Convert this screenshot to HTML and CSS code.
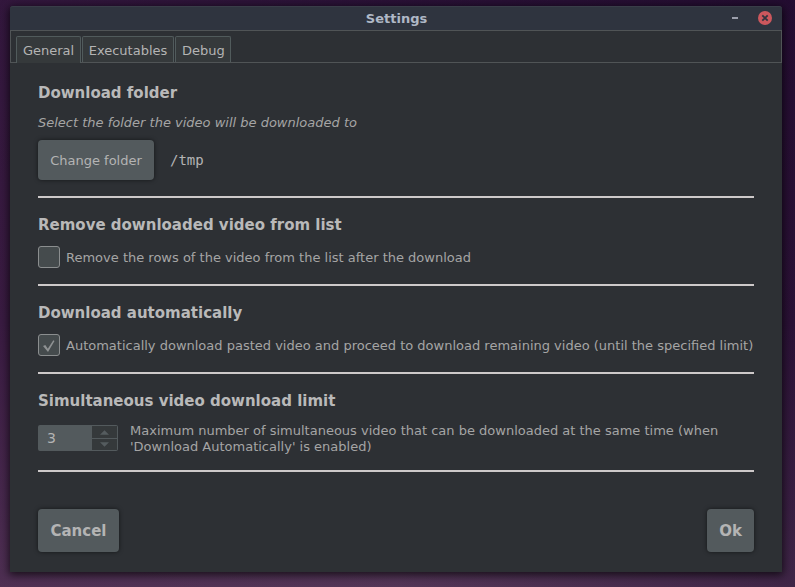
FILE: index.html
```
<!DOCTYPE html>
<html lang="en">
<head>
<meta charset="utf-8">
<title>Settings</title>
<link rel="stylesheet" href="styles.css">
</head>
<body>
<main class="window">
  <header class="titlebar">
    <span class="title">Settings</span>
    <svg class="controls" width="42" height="16" viewBox="0 0 42 16">
      <rect x="0" y="7" width="6" height="2" fill="#9c9fac"/>
      <circle cx="33" cy="8" r="7" fill="#cc575d"/>
      <path d="M30.3 5.3l5.4 5.4m0-5.4l-5.4 5.4" stroke="#2f343f" stroke-width="1.8"/>
    </svg>
  </header>
  <nav class="tabs">
    <span class="tab tab-general active">General</span>
    <span class="tab tab-exec">Executables</span>
    <span class="tab tab-debug">Debug</span>
  </nav>
  <div class="content">
    <section class="section first">
      <h2>Download folder</h2>
      <p class="hint">Select the folder the video will be downloaded to</p>
      <div class="row folder">
        <button class="btn change">Change folder</button>
        <span class="path">/tmp</span>
      </div>
    </section>
    <section class="section">
      <h2>Remove downloaded video from list</h2>
      <label class="row"><span class="check"></span><span class="check-label">Remove the rows of the video from the list after the download</span></label>
    </section>
    <section class="section">
      <h2>Download automatically</h2>
      <label class="row"><span class="check"><svg width="20" height="20" viewBox="0 0 20 20"><path d="M4 11L6.3 10l2.5 3.7L14.3 5.3L15.5 6L9 17Z" fill="#8f9293"/></svg></span><span class="check-label">Automatically download pasted video and proceed to download remaining video (until the specified limit)</span></label>
    </section>
    <section class="section">
      <h2>Simultaneous video download limit</h2>
      <div class="row">
        <div class="spinner">
          <span class="value">3</span>
          <span class="steps">
            <span class="step"><svg width="9" height="5" viewBox="0 0 10 5"><path d="M0 5L5 0l5 5z" fill="#555c5f"/></svg></span>
            <span class="step"><svg width="9" height="5" viewBox="0 0 10 5"><path d="M0 0L5 5l5-5z" fill="#555c5f"/></svg></span>
          </span>
        </div>
        <p class="limit">Maximum number of simultaneous video that can be downloaded at the same time (when 'Download Automatically' is enabled)</p>
      </div>
    </section>
    <footer class="actions">
      <button class="btn cancel">Cancel</button>
      <button class="btn ok">Ok</button>
    </footer>
  </div>
</main>
</body>
</html>
```
FILE: styles.css
```
* { box-sizing: border-box; }
html { height: 100%; }
body {
  margin: 0;
  height: 587px;
  padding: 6px 13px 15px 10px;
  overflow: hidden;
  font: 13px/16px "DejaVu Sans", sans-serif;
  color: #a5a5a5;
  background: linear-gradient(90deg, rgba(62, 30, 68, 0.4), rgba(30, 8, 40, 0.1) 50%, rgba(24, 5, 38, 0.4)), linear-gradient(#2b1238, #36193f 55%, #4c2e52 85%, #593b5c);
}
.window {
  height: 566px;
  background: #2d3034;
  border-radius: 3px 3px 0 0;
  box-shadow: 0 2px 8px 1px rgba(0, 0, 0, 0.7);
}
.titlebar {
  position: relative;
  height: 24px;
  display: flex;
  align-items: center;
  justify-content: center;
  background: #2f343f;
  border-top: 1px solid #393d48;
  border-radius: 3px 3px 0 0;
}
.title { padding-left: 1px; font-weight: bold; color: #afb8c6; }
.controls { position: absolute; right: 8px; top: 3px; }
.tabs {
  height: 33px;
  display: flex;
  align-items: flex-end;
  padding-left: 5px;
  border: 1px solid #505456;
}
.tab {
  height: 26px;
  padding-top: 6px;
  text-align: center;
  white-space: nowrap;
  font-size: 13px;
  color: #b4b4b4;
  background: #35393b;
  border: 1px solid #515b5c;
  border-bottom: 0;
  border-radius: 2px 2px 0 0;
}
.tab-general { width: 65px; margin-right: 1px; }
.tab-exec { width: 92px; margin-right: 1px; }
.tab-debug { width: 56px; padding-left: 1px; }
.tab.active { height: 27px; margin-bottom: -1px; }
.content { padding: 0 28px; }
.section {
  padding: 17px 0 16px;
  border-bottom: 2px solid #cdc9c9;
}
.section.first { padding-top: 20px; }
h2 { margin: 0 0 11px; font-size: 15px; line-height: 20px; color: #b9b9b9; }
.first h2 { margin-bottom: 10px; }
.hint { margin: 0 0 7px; line-height: 20px; font-style: italic; }
.row { display: flex; align-items: center; }
.btn {
  padding: 0;
  border: 0;
  border-radius: 4px;
  background: #535a5d;
  color: #b4b4b4;
  font: 13px "DejaVu Sans", sans-serif;
  box-shadow: 0 0 4px rgba(0, 0, 0, 0.55);
}
.change { width: 116px; height: 40px; }
.path { margin-left: 16px; font: 14px "DejaVu Sans Mono", monospace; color: #b4b4b4; }
.check {
  width: 22px;
  height: 22px;
  flex: none;
  border: 1px solid #8b8e8f;
  border-radius: 3px;
  background: #454b4d;
}
.check svg { display: block; }
.check-label { margin-left: 6px; padding-top: 2px; white-space: nowrap; }
.spinner {
  width: 80px;
  height: 26px;
  flex: none;
  display: flex;
  justify-content: space-between;
  border-radius: 2px;
  background: #535a5d;
}
.value { padding: 5px 0 0 9px; font-size: 14px; line-height: 16px; color: #b4b4b4; }
.steps {
  width: 26px;
  padding: 1px 1px 1px 0;
  display: grid;
  grid-template-rows: 12px 11px;
  gap: 1px;
}
.step {
  display: flex;
  align-items: center;
  justify-content: center;
  background: #35393b;
}
.limit { margin: 1px 0 -1px 12px; }
.actions { display: flex; justify-content: space-between; padding-top: 37px; }
.actions .btn { height: 43px; font-size: 15px; font-weight: bold; }
.cancel { width: 81px; }
.ok { width: 47px; }
```
